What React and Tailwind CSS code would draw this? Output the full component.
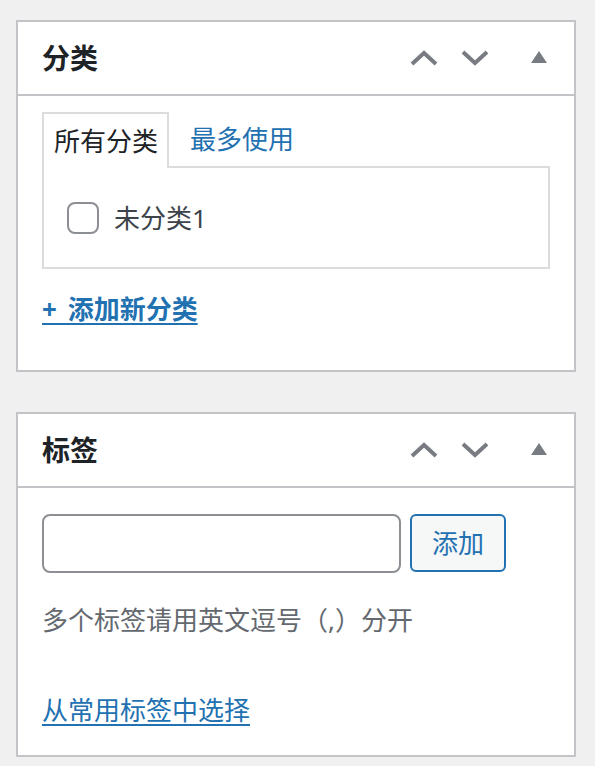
import React from 'react'

const font = { fontFamily: '"Noto Sans", "Noto Sans CJK SC", sans-serif' }

const HeaderActions = () => (
    <div className="flex items-center pr-[27px] text-[#787c82]">
        <svg width="28" height="16" viewBox="0 0 28 16" fill="none">
            <polyline points="2,14 14,3 26,14" stroke="currentColor" strokeWidth="4" />
        </svg>
        <svg width="28" height="16" viewBox="0 0 28 16" fill="none" className="ml-[23px]">
            <polyline points="2,2 14,13 26,2" stroke="currentColor" strokeWidth="4" />
        </svg>
        <svg width="16" height="12" viewBox="0 0 16 12" className="ml-[42px] -mt-[2px]">
            <polygon points="8,0 16,12 0,12" fill="currentColor" />
        </svg>
    </div>
)

const Postbox = ({ title, children }) => (
    <div className="w-[560px] border-2 border-[#c3c4c7] bg-white">
        <div className="h-[74px] border-b-2 border-[#c3c4c7] flex items-center justify-between pl-[24px]">
            <h2 className="text-[28px] font-bold text-[#1d2327] leading-none">{title}</h2>
            <HeaderActions />
        </div>
        {children}
    </div>
)

const App = () => {
    return (
        <div className="min-h-screen bg-[#f0f0f1] pt-5 px-4 pb-4" style={font}>
            {/* 分类 */}
            <Postbox title="分类">
                <div className="px-6 pt-4 pb-[41px]">
                    <div className="flex items-end text-[26px] whitespace-nowrap">
                        <div className="relative z-10 -mb-[2px] h-[56px] border-2 border-b-0 border-[#dcdcde] bg-white flex items-center pl-[10px] pr-[9px] text-[#1d2327]">
                            所有分类
                        </div>
                        <a href="#" className="ml-[21px] h-[54px] flex items-center text-[#2271b1]">最多使用</a>
                    </div>
                    <div className="h-[103px] w-[508px] border-2 border-[#dcdcde] flex items-center pl-[23px]">
                        <span className="w-[32px] h-[32px] border-2 border-[#8c8f94] rounded-[8px] bg-white"></span>
                        <span className="ml-[15px] text-[26px] text-[#3c434a] leading-none">未分类1</span>
                    </div>
                    <a href="#" className="mt-5 block w-fit h-[40px] leading-[40px] text-[26px] font-bold text-[#2271b1] underline underline-offset-4 [word-spacing:4px]">
                        + 添加新分类
                    </a>
                </div>
            </Postbox>

            {/* 标签 */}
            <div className="mt-10">
                <Postbox title="标签">
                    <div className="px-6 pt-[26px] pb-[25px]">
                        <div className="flex items-start">
                            <input type="text" className="w-[359px] h-[59px] border-2 border-[#8c8f94] rounded-[8px] bg-white outline-none px-3 text-[26px]" />
                            <button className="ml-[9px] w-[96px] h-[58px] border-2 border-[#2271b1] rounded-[6px] bg-[#f6f7f7] text-[26px] text-[#2271b1]">
                                添加
                            </button>
                        </div>
                        <p className="mt-[27px] h-[40px] leading-[40px] text-[26px] text-[#646970]">多个标签请用英文逗号（,）分开</p>
                        <a href="#" className="mt-[50px] block w-fit h-[40px] leading-[40px] text-[26px] text-[#2271b1] underline underline-offset-4">
                            从常用标签中选择
                        </a>
                    </div>
                </Postbox>
            </div>
        </div>
    )
}

export default App
